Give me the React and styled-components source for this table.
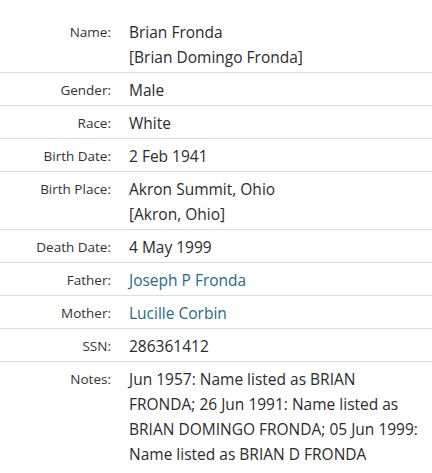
import React from 'react';
import styled, { createGlobalStyle } from 'styled-components';

const GlobalStyle = createGlobalStyle`
  body {
    margin: 0;
    background: #fff;
    font-family: "Open Sans", "Noto Sans", sans-serif;
  }
`;

const record = [
  { label: 'Name', lines: ['Brian Fronda', '[Brian Domingo Fronda]'] },
  { label: 'Gender', lines: ['Male'] },
  { label: 'Race', lines: ['White'] },
  { label: 'Birth Date', lines: ['2 Feb 1941'] },
  { label: 'Birth Place', lines: ['Akron Summit, Ohio', '[Akron, Ohio]'] },
  { label: 'Death Date', lines: ['4 May 1999'] },
  { label: 'Father', lines: ['Joseph P Fronda'], link: true },
  { label: 'Mother', lines: ['Lucille Corbin'], link: true },
  { label: 'SSN', lines: ['286361412'] },
  {
    label: 'Notes',
    lines: [
      'Jun 1957: Name listed as BRIAN FRONDA; 26 Jun 1991: Name listed as BRIAN DOMINGO FRONDA; 05 Jun 1999: Name listed as BRIAN D FRONDA',
    ],
  },
];

const App = () => (
  <>
    <GlobalStyle />
    <Table>
      {record.map((row) => (
        <Row key={row.label}>
          <Label>{row.label}:</Label>
          <Value>
            {row.lines.map((line) =>
              row.link ? (
                <Link key={line} href="#">{line}</Link>
              ) : (
                <Line key={line}>{line}</Line>
              )
            )}
          </Value>
        </Row>
      ))}
    </Table>
  </>
);

export default App;

const Table = styled.div`
  padding-top: 14px;
  width: 432px;
`;

const Row = styled.div`
  display: grid;
  grid-template-columns: 111px 1fr;
  column-gap: 18px;
  padding: 5px 0 2px;
  border-top: 1px solid #dcdcdc;
  line-height: 25px;

  &:first-child {
    border-top: none;
    padding-top: 6px;
  }
`;

const Label = styled.div`
  text-align: right;
  color: #333;
  font-size: 13.5px;
`;

const Value = styled.div`
  color: #2b2b2b;
  font-size: 15.5px;
  padding-right: 12px;
`;

const Line = styled.div``;

const Link = styled.a`
  display: block;
  color: #256b88;
  text-decoration: none;
`;
